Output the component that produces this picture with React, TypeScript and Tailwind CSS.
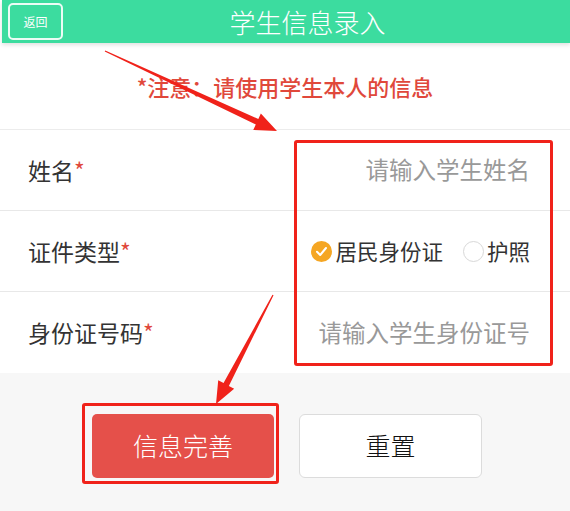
import type { ReactNode } from 'react'

const FONT = { fontFamily: '"Noto Sans CJK SC", "Noto Sans", sans-serif' }

function arrowPoints(x1: number, y1: number, x2: number, y2: number) {
  const dx = x2 - x1
  const dy = y2 - y1
  const len = Math.hypot(dx, dy)
  const ux = dx / len
  const uy = dy / len
  const nx = -uy
  const ny = ux
  const headLen = 22
  const headW = 9
  const shaftW = 3
  const bx = x2 - ux * headLen
  const by = y2 - uy * headLen
  const pts = [
    [x1 + nx * 0.6, y1 + ny * 0.6],
    [bx + nx * shaftW, by + ny * shaftW],
    [bx + nx * headW, by + ny * headW],
    [x2, y2],
    [bx - nx * headW, by - ny * headW],
    [bx - nx * shaftW, by - ny * shaftW],
    [x1 - nx * 0.6, y1 - ny * 0.6],
  ]
  return pts.map((p) => p.join(',')).join(' ')
}

function Row({ label, children, last }: { label: string; children: ReactNode; last?: boolean }) {
  return (
    <div
      className={`flex h-[81px] items-center justify-between pl-[28px] pr-[40px] ${
        last ? '' : 'border-b border-[#e8e8e8]'
      }`}
    >
      <div className="text-[23px] text-[#333]">
        {label}
        <span className="text-[#e0483b]">*</span>
      </div>
      {children}
    </div>
  )
}

export default function App() {
  return (
    <div className="relative flex h-[511px] w-full flex-col overflow-hidden bg-white" style={FONT}>
      <header className="relative z-10 ml-[2px] flex h-[43px] shrink-0 items-center bg-[#3cdc9f] px-[6px] shadow-[0_2px_4px_rgba(0,0,0,0.12)]">
        <button className="flex h-[37px] w-[55px] items-center justify-center rounded-[5px] border-2 border-white/90 text-[12px] text-white">
          返回
        </button>
        <h1 className="flex-1 pr-[12px] text-center text-[26px] font-light leading-none text-white">学生信息录入</h1>
      </header>

      <div className="flex h-[86px] shrink-0 items-center justify-center text-[22px] font-medium text-[#e0483b]">
        *注意：请使用学生本人的信息
      </div>

      <div className="shrink-0 border-t border-[#ececec]">
        <Row label="姓名">
          <span className="text-[23.5px] text-[#999]">请输入学生姓名</span>
        </Row>
        <Row label="证件类型">
          <div className="flex items-center text-[21px] text-[#333]">
            <span className="mr-[3px] flex h-[21px] w-[21px] items-center justify-center rounded-full bg-[#f5a623]">
              <svg width="13" height="13" viewBox="0 0 13 13" fill="none">
                <path d="M2 6.8 L5.2 10 L11 3" stroke="white" strokeWidth="2" strokeLinecap="round" strokeLinejoin="round" />
              </svg>
            </span>
            <span className="text-[21.5px]">居民身份证</span>
            <span className="ml-[20px] mr-[3px] h-[21px] w-[21px] rounded-full border border-[#d8d8d8]" />
            <span className="text-[21.5px]">护照</span>
          </div>
        </Row>
        <Row label="身份证号码" last>
          <span className="text-[23.5px] text-[#999]">请输入学生身份证号</span>
        </Row>
      </div>

      <div className="flex flex-1 justify-center gap-[25px] bg-[#f7f7f7] pl-[4px] pt-[41px]">
        <button className="h-[64px] w-[182px] rounded-[5px] bg-[#e5504a] text-[25px] font-light text-white">
          信息完善
        </button>
        <button className="h-[64px] w-[183px] rounded-[6px] border border-[#dcdcdc] bg-white text-[25px] font-light text-[#111]">
          重置
        </button>
      </div>

      {/* annotation overlays */}
      <div className="pointer-events-none absolute left-[294px] top-[140px] h-[226px] w-[259px] rounded-[3px] border-[3px] border-[#f0221a]" />
      <div className="pointer-events-none absolute left-[82px] top-[403px] h-[81px] w-[197px] rounded-[3px] border-[3px] border-[#f0221a]" />
      <svg className="pointer-events-none absolute left-0 top-0" width="570" height="511">
        <polygon points={arrowPoints(105, 51, 277, 131)} fill="#f0221a" />
        <polygon points={arrowPoints(273, 295, 216, 404)} fill="#f0221a" />
      </svg>
    </div>
  )
}
